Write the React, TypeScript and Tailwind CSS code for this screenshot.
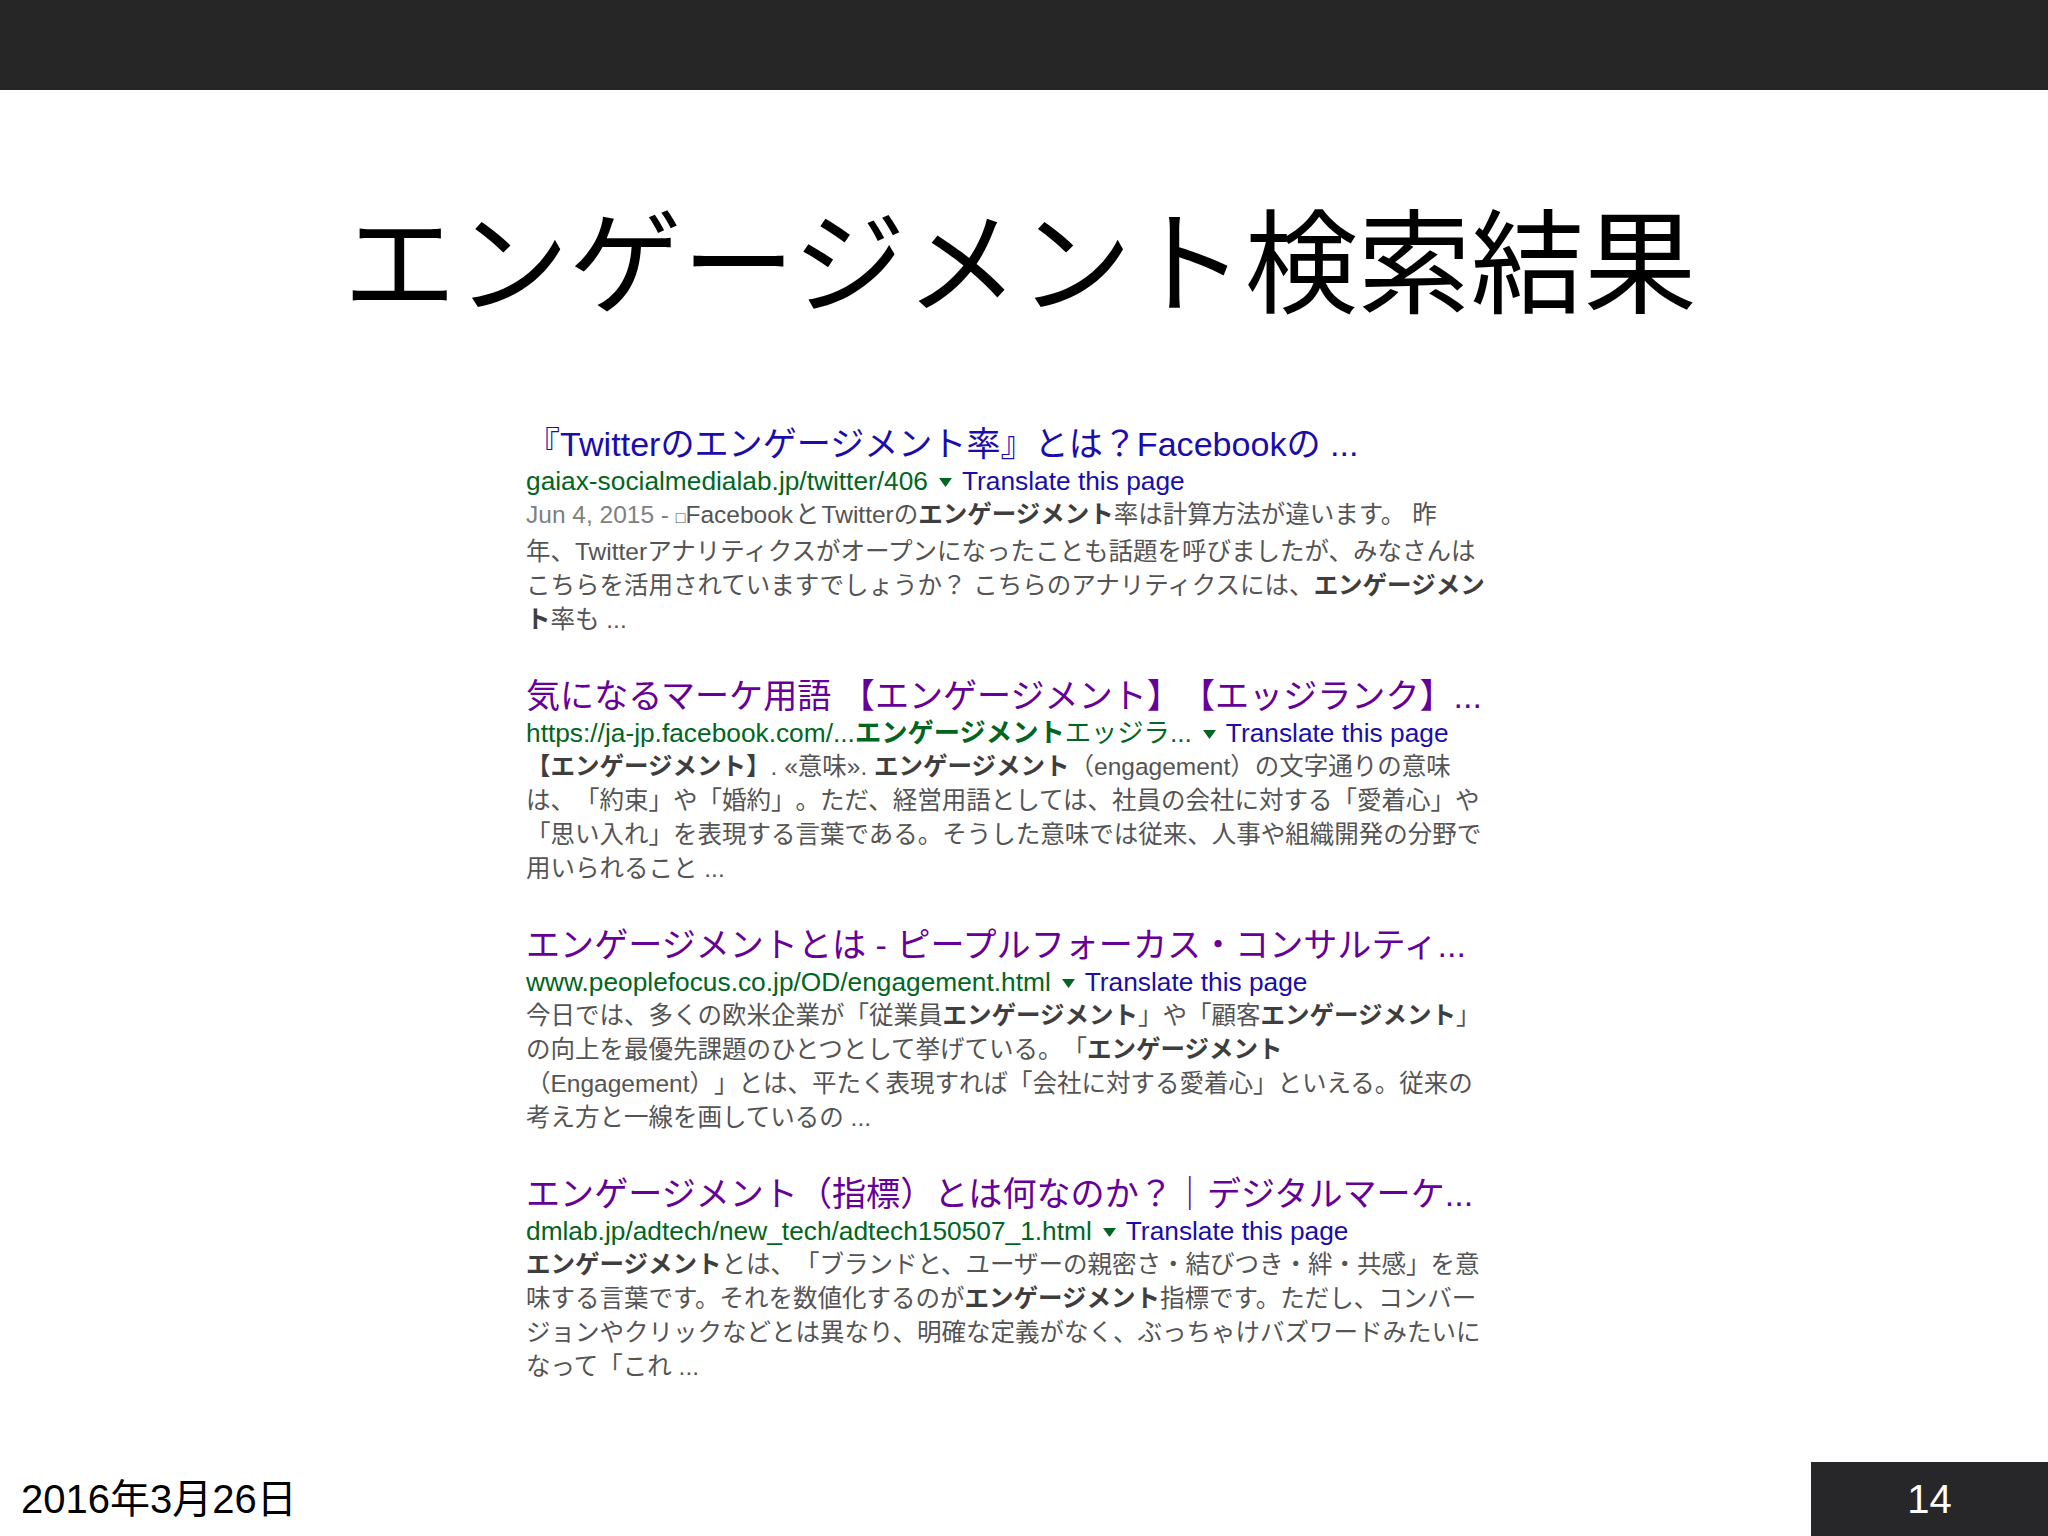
import React from "react";

const JP = "font-['Liberation_Sans','Noto_Sans_CJK_JP',sans-serif]";

const B = ({ children }: { children: React.ReactNode }) => (
  <span className="font-bold text-[#3e3e3e]">{children}</span>
);

function Result({
  title,
  titleColor,
  url,
  lines,
}: {
  title: string;
  titleColor: string;
  url: React.ReactNode;
  lines: React.ReactNode[];
}) {
  return (
    <div className="flex flex-col">
      <div className={`text-[34.1px] leading-[40px] whitespace-nowrap ${titleColor}`}>{title}</div>
      <div className="text-[26.3px] leading-[34px] whitespace-nowrap flex items-center">
        <span className="text-[#006621]">{url}</span>
        <svg width="13" height="9" viewBox="0 0 13 9" className="ml-[11px] mr-[10px] relative top-[1px]">
          <path d="M0 0 L13 0 L6.5 9 Z" fill="#006621" />
        </svg>
        <span className="text-[#1a0dab]">Translate this page</span>
      </div>
      <div className="text-[24.5px] leading-[34px] text-[#545454]">
        {lines.map((l, i) => (
          <div key={i} className="whitespace-nowrap">
            {l}
          </div>
        ))}
      </div>
    </div>
  );
}

export default function App() {
  return (
    <div className={`w-[2048px] h-[1536px] bg-white flex flex-col [text-spacing-trim:space-all] ${JP}`}>
      <div className="h-[90px] bg-[#262626] shrink-0" />
      <h1 className="mt-[109px] pr-[8px] text-center text-[113px] leading-[113px] text-black font-normal font-['Noto_Sans_CJK_JP',sans-serif]">
        エンゲージメント検索結果
      </h1>
      <div className="ml-[526px] mt-[112px] flex flex-col gap-[39px]">
        <Result
          title="『Twitterのエンゲージメント率』とは？Facebookの ..."
          titleColor="text-[#1a0dab]"
          url="gaiax-socialmedialab.jp/twitter/406"
          lines={[
            <>
              <span className="text-[#808080]">Jun 4, 2015 - </span>
              <span className="text-[16px]">□</span>Facebook<span className="mx-[2px]">と</span>Twitterの<B>エンゲージメント</B>率は計算方法が違います。 昨
            </>,
            <>年、Twitterアナリティクスがオープンになったことも話題を呼びましたが、みなさんは</>,
            <>
              こちらを活用されていますでしょうか？ こちらのアナリティクスには、<B>エンゲージメン</B>
            </>,
            <>
              <B>ト</B>率も ...
            </>,
          ]}
        />
        <Result
          title="気になるマーケ用語 【エンゲージメント】【エッジランク】..."
          titleColor="text-[#660099]"
          url={
            <>
              https://ja-jp.facebook.com/...<span className="font-bold">エンゲージメント</span>エッジラ...
            </>
          }
          lines={[
            <>
              <B>【エンゲージメント】</B>. «意味». <B>エンゲージメント</B>（engagement）の文字通りの意味
            </>,
            <>は、「約束」や「婚約」。ただ、経営用語としては、社員の会社に対する「愛着心」や</>,
            <>「思い入れ」を表現する言葉である。そうした意味では従来、人事や組織開発の分野で</>,
            <>用いられること ...</>,
          ]}
        />
        <Result
          title="エンゲージメントとは - ピープルフォーカス・コンサルティ..."
          titleColor="text-[#660099]"
          url="www.peoplefocus.co.jp/OD/engagement.html"
          lines={[
            <>
              今日では、多くの欧米企業が「従業員<B>エンゲージメント</B>」や「顧客<B>エンゲージメント</B>」
            </>,
            <>
              の向上を最優先課題のひとつとして挙げている。「<B>エンゲージメント</B>
            </>,
            <>（Engagement）」とは、平たく表現すれば「会社に対する愛着心」といえる。従来の</>,
            <>考え方と一線を画しているの ...</>,
          ]}
        />
        <Result
          title="エンゲージメント（指標）とは何なのか？｜デジタルマーケ..."
          titleColor="text-[#660099]"
          url="dmlab.jp/adtech/new_tech/adtech150507_1.html"
          lines={[
            <>
              <B>エンゲージメント</B>とは、「ブランドと、ユーザーの親密さ・結びつき・絆・共感」を意
            </>,
            <>
              味する言葉です。それを数値化するのが<B>エンゲージメント</B>指標です。ただし、コンバー
            </>,
            <>ジョンやクリックなどとは異なり、明確な定義がなく、ぶっちゃけバズワードみたいに</>,
            <>なって「これ ...</>,
          ]}
        />
      </div>
      <div className="mt-auto h-[74px] flex items-center justify-between">
        <div className="pl-[21px] text-[40px] leading-none text-black">2016年3月26日</div>
        <div className="w-[237px] h-full bg-[#272629] flex items-center justify-center text-white text-[40px] leading-none">
          14
        </div>
      </div>
    </div>
  );
}
